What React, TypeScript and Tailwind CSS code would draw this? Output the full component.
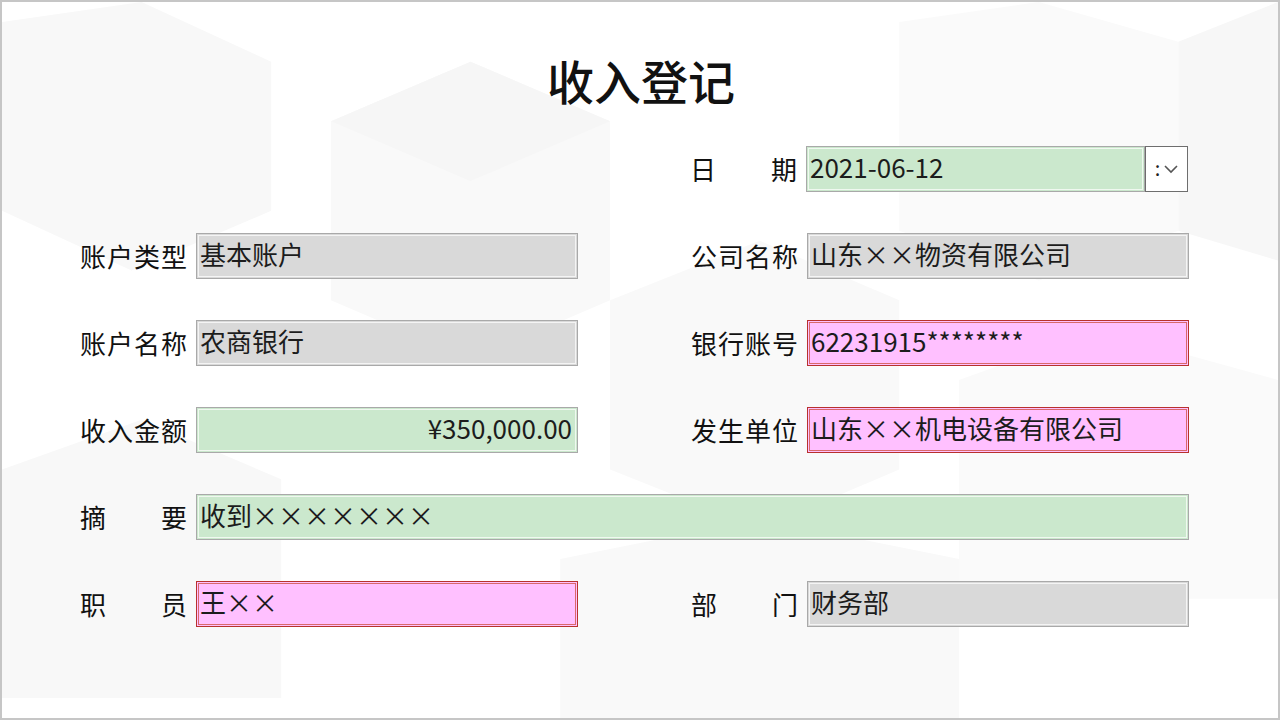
import React from "react";

type Tone = "gray" | "green" | "pink";

const toneClass: Record<Tone, string> = {
  gray: "bg-[#d9d9d9] border-[#a9a9a9]",
  green: "bg-[#cbe8cd] border-[#a9a9a9]",
  pink: "bg-[#ffc0ff] border-[#b8322e]",
};

const innerClass: Record<Tone, string> = {
  gray: "border-white/70",
  green: "border-white/70",
  pink: "border-[#d86a6a]",
};

const Label = ({ text }: { text: string }) => {
  const chars = text.split("");
  return (
    <div className="w-[107px] shrink-0 flex justify-between text-[26px] leading-none text-[#111]">
      {chars.map((c, i) => (
        <span key={i}>{c}</span>
      ))}
    </div>
  );
};

const Field = ({
  value,
  tone,
  right,
  className = "w-[382px]",
}: {
  value: string;
  tone: Tone;
  right?: boolean;
  className?: string;
}) => (
  <div className={`h-[46px] border p-px ${toneClass[tone]} ${className}`}>
    <div
      className={`h-full border ${innerClass[tone]} flex items-center px-[1px] pb-[4px] text-[26px] leading-none text-[#1c1c1c] ${
        right ? "justify-end pr-[3px]" : ""
      }`}
    >
      {value}
    </div>
  </div>
);

const Background = () => (
  <svg
    className="absolute inset-0 w-full h-full"
    viewBox="0 0 1280 720"
    preserveAspectRatio="none"
  >
    <polygon points="0,20 140,0 270,60 270,210 130,270 0,210" fill="#f8f8f8" />
    <polygon points="330,120 470,60 610,120 610,300 470,360 330,300" fill="#f9f9f9" />
    <polygon points="470,60 610,120 470,180 330,120" fill="#f6f6f6" />
    <polygon points="610,300 760,240 900,300 900,470 760,530 610,470" fill="#f9f9f9" />
    <polygon points="900,20 1040,0 1180,40 1180,230 1040,280 900,230" fill="#fafafa" />
    <polygon points="1180,40 1280,0 1280,260 1180,230" fill="#f7f7f7" />
    <polygon points="0,470 140,420 280,480 280,700 0,700" fill="#f8f8f8" />
    <polygon points="560,560 760,520 960,560 960,720 560,720" fill="#f9f9f9" />
    <polygon points="960,380 1100,330 1280,380 1280,600 960,600" fill="#fafafa" />
  </svg>
);

export default function App() {
  return (
    <div
      className="relative w-[1280px] h-[720px] overflow-hidden bg-white border-2 border-[#c6c6c6]"
      style={{ fontFamily: '"Noto Sans CJK SC", "Noto Sans", sans-serif' }}
    >
      <Background />
      <div className="relative flex flex-col">
        <h1 className="mt-[50px] text-center text-[47px] leading-[56px] font-medium text-[#111] pl-[2px]">
          收入登记
        </h1>

        <div className="mt-[38px] pl-[78px] flex flex-col gap-[41px]">
          {/* 日期 */}
          <div className="flex items-center h-[46px]">
            <div className="w-[497px] shrink-0" />
            <div className="ml-[113px] flex items-center gap-[9px]">
              <Label text="日期" />
              <div className="flex">
                <Field value="2021-06-12" tone="green" className="w-[339px]" />
                <div className="w-[43px] h-[46px] bg-white border border-[#6e6e6e] flex items-center justify-center gap-[4px]">
                  <span className="text-[20px] leading-none text-[#222] pb-[3px]">:</span>
                  <svg width="14" height="10" viewBox="0 0 14 10" fill="none">
                    <path d="M1 2 L7 8 L13 2" stroke="#555" strokeWidth="1.6" />
                  </svg>
                </div>
              </div>
            </div>
          </div>

          <div className="flex items-center h-[46px]">
            <div className="flex items-center gap-[9px]">
              <Label text="账户类型" />
              <Field value="基本账户" tone="gray" />
            </div>
            <div className="ml-[113px] flex items-center gap-[9px]">
              <Label text="公司名称" />
              <Field value="山东××物资有限公司" tone="gray" />
            </div>
          </div>

          <div className="flex items-center h-[46px]">
            <div className="flex items-center gap-[9px]">
              <Label text="账户名称" />
              <Field value="农商银行" tone="gray" />
            </div>
            <div className="ml-[113px] flex items-center gap-[9px]">
              <Label text="银行账号" />
              <Field value="62231915********" tone="pink" />
            </div>
          </div>

          <div className="flex items-center h-[46px]">
            <div className="flex items-center gap-[9px]">
              <Label text="收入金额" />
              <Field value="¥350,000.00" tone="green" right />
            </div>
            <div className="ml-[113px] flex items-center gap-[9px]">
              <Label text="发生单位" />
              <Field value="山东××机电设备有限公司" tone="pink" />
            </div>
          </div>

          <div className="flex items-center h-[46px] gap-[9px]">
            <Label text="摘要" />
            <Field value="收到×××××××" tone="green" className="w-[993px]" />
          </div>

          <div className="flex items-center h-[46px]">
            <div className="flex items-center gap-[9px]">
              <Label text="职员" />
              <Field value="王××" tone="pink" />
            </div>
            <div className="ml-[113px] flex items-center gap-[9px]">
              <Label text="部门" />
              <Field value="财务部" tone="gray" />
            </div>
          </div>
        </div>
      </div>
    </div>
  );
}
